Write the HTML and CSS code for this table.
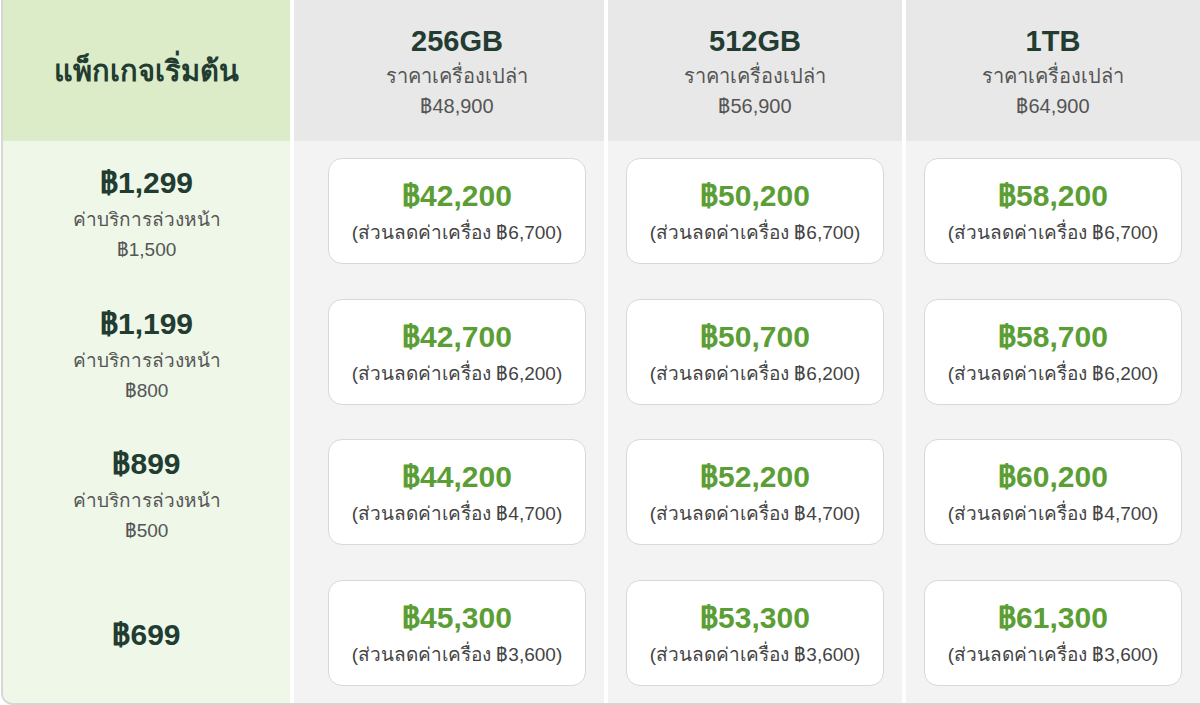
FILE: index.html
```html
<!DOCTYPE html>
<html lang="th">

<head>
  <meta charset="UTF-8">
  <meta name="viewport" content="width=device-width, initial-scale=1.0">
  <link rel="stylesheet" href="styles.css">
  <title>แพ็กเกจเริ่มต้น</title>
</head>

<body>

  <div id="price-table">
    <div class="cell head green-head">
      <div class="package-title">แพ็กเกจเริ่มต้น</div>
    </div>
    <div class="cell head first-col">
      <div class="size">256GB</div>
      <div class="note">ราคาเครื่องเปล่า</div>
      <div class="note">฿48,900</div>
    </div>
    <div class="cell head">
      <div class="size">512GB</div>
      <div class="note">ราคาเครื่องเปล่า</div>
      <div class="note">฿56,900</div>
    </div>
    <div class="cell head">
      <div class="size">1TB</div>
      <div class="note">ราคาเครื่องเปล่า</div>
      <div class="note">฿64,900</div>
    </div>

    <!-- row 1 -->
    <div class="cell plan">
      <div class="plan-price">฿1,299</div>
      <div class="plan-note">ค่าบริการล่วงหน้า</div>
      <div class="plan-note">฿1,500</div>
    </div>
    <div class="cell body first-col">
      <div class="deal"><div class="deal-price">฿42,200</div><div class="deal-off">(ส่วนลดค่าเครื่อง ฿6,700)</div></div>
    </div>
    <div class="cell body">
      <div class="deal"><div class="deal-price">฿50,200</div><div class="deal-off">(ส่วนลดค่าเครื่อง ฿6,700)</div></div>
    </div>
    <div class="cell body">
      <div class="deal"><div class="deal-price">฿58,200</div><div class="deal-off">(ส่วนลดค่าเครื่อง ฿6,700)</div></div>
    </div>

    <!-- row 2 -->
    <div class="cell plan">
      <div class="plan-price">฿1,199</div>
      <div class="plan-note">ค่าบริการล่วงหน้า</div>
      <div class="plan-note">฿800</div>
    </div>
    <div class="cell body first-col">
      <div class="deal"><div class="deal-price">฿42,700</div><div class="deal-off">(ส่วนลดค่าเครื่อง ฿6,200)</div></div>
    </div>
    <div class="cell body">
      <div class="deal"><div class="deal-price">฿50,700</div><div class="deal-off">(ส่วนลดค่าเครื่อง ฿6,200)</div></div>
    </div>
    <div class="cell body">
      <div class="deal"><div class="deal-price">฿58,700</div><div class="deal-off">(ส่วนลดค่าเครื่อง ฿6,200)</div></div>
    </div>

    <!-- row 3 -->
    <div class="cell plan">
      <div class="plan-price">฿899</div>
      <div class="plan-note">ค่าบริการล่วงหน้า</div>
      <div class="plan-note">฿500</div>
    </div>
    <div class="cell body first-col">
      <div class="deal"><div class="deal-price">฿44,200</div><div class="deal-off">(ส่วนลดค่าเครื่อง ฿4,700)</div></div>
    </div>
    <div class="cell body">
      <div class="deal"><div class="deal-price">฿52,200</div><div class="deal-off">(ส่วนลดค่าเครื่อง ฿4,700)</div></div>
    </div>
    <div class="cell body">
      <div class="deal"><div class="deal-price">฿60,200</div><div class="deal-off">(ส่วนลดค่าเครื่อง ฿4,700)</div></div>
    </div>

    <!-- row 4 -->
    <div class="cell plan">
      <div class="plan-price">฿699</div>
    </div>
    <div class="cell body first-col">
      <div class="deal"><div class="deal-price">฿45,300</div><div class="deal-off">(ส่วนลดค่าเครื่อง ฿3,600)</div></div>
    </div>
    <div class="cell body">
      <div class="deal"><div class="deal-price">฿53,300</div><div class="deal-off">(ส่วนลดค่าเครื่อง ฿3,600)</div></div>
    </div>
    <div class="cell body">
      <div class="deal"><div class="deal-price">฿61,300</div><div class="deal-off">(ส่วนลดค่าเครื่อง ฿3,600)</div></div>
    </div>
  </div>

</body>

</html>
```

FILE: styles.css
```css
body {
  margin: 0;
  background-color: #fff;
  font-family: 'Liberation Sans', 'Noto Sans', sans-serif;
  color: #555;
}

#price-table {
  margin-left: 1px;
  height: 705px;
  box-sizing: border-box;
  display: grid;
  grid-template-columns: 287px 310px 294px 294px;
  grid-template-rows: 141px repeat(4, 1fr);
  column-gap: 4px;
  border-left: 2px solid #d6d6d6;
  border-bottom: 2px solid #d6d6d6;
  border-bottom-left-radius: 12px;
  overflow: hidden;
}

.cell {
  display: flex;
  flex-direction: column;
  align-items: center;
  justify-content: center;
  text-align: center;
}

.head {
  background-color: #e8e8e8;
}

.green-head {
  background-color: #dcecc9;
}

.plan {
  background-color: #eef7e8;
  padding-top: 6px;
}

.body {
  background-color: #f3f3f3;
}

.first-col {
  padding-left: 16px;
}

.package-title {
  font-size: 29px;
  font-weight: bold;
  color: #223c31;
}

.size {
  font-size: 29px;
  font-weight: bold;
  color: #223c31;
  line-height: 40px;
}

.plan-price {
  font-size: 30px;
  font-weight: bold;
  color: #223c31;
  line-height: 40px;
  margin-bottom: 2px;
}

.note {
  font-size: 20px;
  line-height: 30px;
  color: #555;
}

.plan-note {
  font-size: 19px;
  line-height: 30px;
  color: #555;
}

.deal {
  width: 256px;
  height: 102px;
  background-color: #fff;
  border: 1px solid #d8d8d8;
  border-radius: 14px;
  display: flex;
  flex-direction: column;
  align-items: center;
  justify-content: center;
  padding-top: 2px;
  box-sizing: content-box;
}

.deal-price {
  font-size: 30px;
  font-weight: bold;
  color: #5b9e35;
  line-height: 40px;
  margin-bottom: 2px;
}

.deal-off {
  font-size: 19px;
  line-height: 30px;
  color: #444;
}
```
